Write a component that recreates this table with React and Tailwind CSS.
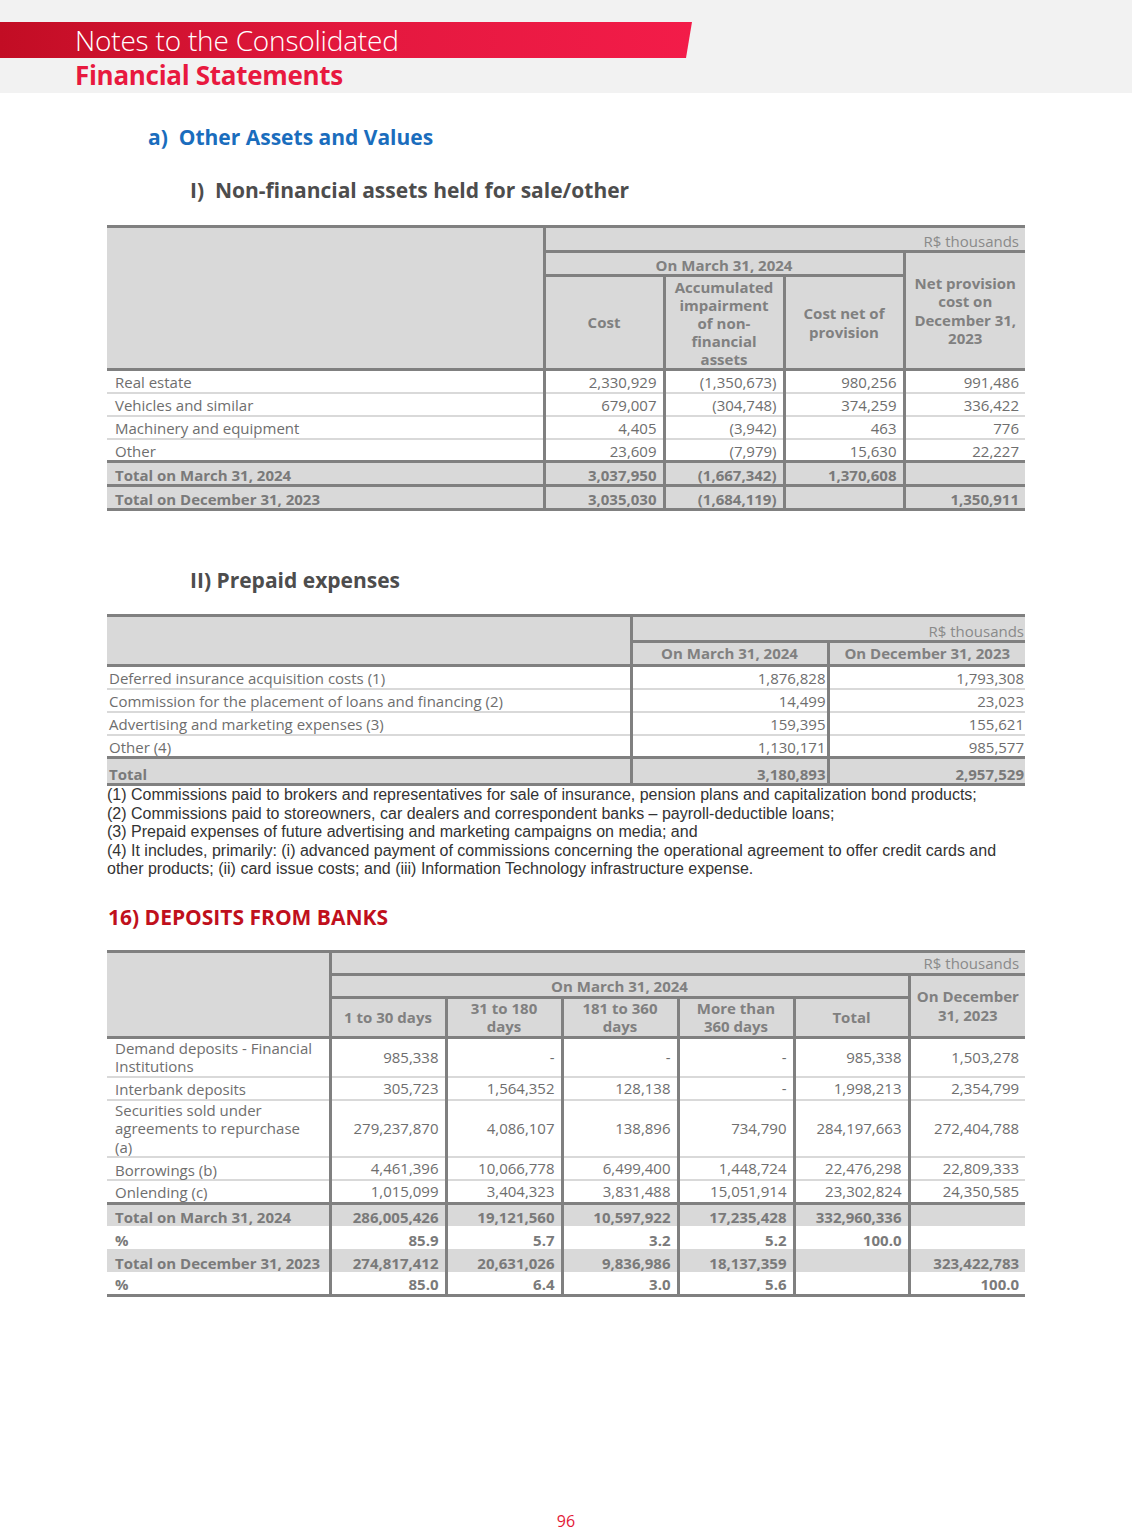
import React from 'react';

const thBase = 'bg-[#d9d9d9] font-bold text-[#808080]';

function Header() {
  return (
    <div className="h-[93px] bg-[#f2f2f2] pt-[22px]">
      <div className="h-[36px] w-[692px] bg-gradient-to-r from-[#c20d24] via-[#e3183e] to-[#f31c49] [clip-path:polygon(0_0,100%_0,calc(100%-6px)_100%,0_100%)] flex items-center pl-[75px]">
        <span className="text-white text-[28px] font-light leading-none tracking-[-0.2px]">Notes to the Consolidated</span>
      </div>
      <div className="pl-[75px] pt-[2px] text-[26px] font-bold leading-[31px] tracking-[-0.3px] text-[#e8193f]">Financial Statements</div>
    </div>
  );
}

function AssetsTable() {
  const rows = [
    ['Real estate', '2,330,929', '(1,350,673)', '980,256', '991,486'],
    ['Vehicles and similar', '679,007', '(304,748)', '374,259', '336,422'],
    ['Machinery and equipment', '4,405', '(3,942)', '463', '776'],
    ['Other', '23,609', '(7,979)', '15,630', '22,227'],
  ];
  const totals = [
    ['Total on March 31, 2024', '3,037,950', '(1,667,342)', '1,370,608', ''],
    ['Total on December 31, 2023', '3,035,030', '(1,684,119)', '', '1,350,911'],
  ];
  return (
    <table className="w-[918px] table-fixed border-collapse text-[15px] leading-[18.5px] text-[#6e6e6e]">
      <colgroup>
        <col className="w-[437px]" />
        <col className="w-[120px]" />
        <col className="w-[120px]" />
        <col className="w-[120px]" />
        <col className="w-[121px]" />
      </colgroup>
      <thead>
        <tr className="h-[25px]">
          <th rowSpan={3} className={`${thBase} border-t-[3px] border-b-[3px] border-r-[3px] border-[#808080]`}></th>
          <th colSpan={4} className="bg-[#d9d9d9] border-t-[3px] border-b-[3px] border-[#808080] text-right font-normal text-[#8a8a8a] pr-[6px] align-bottom">
            R$ thousands
          </th>
        </tr>
        <tr className="h-[24px]">
          <th colSpan={3} className={`${thBase} border-b-[3px] border-r-[3px] border-[#808080] align-bottom`}>
            On March 31, 2024
          </th>
          <th rowSpan={2} className={`${thBase} border-b-[3px] border-[#808080] align-middle`}>
            Net provision<br />cost on<br />December 31,<br />2023
          </th>
        </tr>
        <tr className="h-[94px]">
          <th className={`${thBase} border-b-[3px] border-r-[3px] border-[#808080]`}>Cost</th>
          <th className={`${thBase} leading-[18px] border-b-[3px] border-r-[3px] border-[#808080] align-bottom`}>
            Accumulated<br />impairment<br />of non-<br />financial<br />assets
          </th>
          <th className={`${thBase} border-b-[3px] border-r-[3px] border-[#808080]`}>
            Cost net of<br />provision
          </th>
        </tr>
      </thead>
      <tbody>
        {rows.map((r) => (
          <tr key={r[0]} className="h-[23px]">
            <td className="pl-[8px] align-bottom border-b-2 border-b-[#d9d9d9] border-r-[3px] border-r-[#808080]">{r[0]}</td>
            {r.slice(1).map((v, i) => (
              <td
                key={i}
                className={`pr-[6px] text-right align-bottom border-b-2 border-b-[#d9d9d9] ${i < 3 ? 'border-r-[3px] border-r-[#808080]' : ''}`}
              >
                {v}
              </td>
            ))}
          </tr>
        ))}
        {totals.map((r) => (
          <tr key={r[0]} className="h-[24px] bg-[#d9d9d9] font-bold text-[#7a7a7a]">
            <td className="pl-[8px] align-bottom border-t-[3px] border-b-[3px] border-[#808080] border-r-[3px]">{r[0]}</td>
            {r.slice(1).map((v, i) => (
              <td
                key={i}
                className={`pr-[6px] text-right align-bottom border-t-[3px] border-b-[3px] border-[#808080] ${i < 3 ? 'border-r-[3px]' : ''}`}
              >
                {v}
              </td>
            ))}
          </tr>
        ))}
      </tbody>
    </table>
  );
}

function PrepaidTable() {
  const rows = [
    ['Deferred insurance acquisition costs (1)', '1,876,828', '1,793,308'],
    ['Commission for the placement of loans and financing (2)', '14,499', '23,023'],
    ['Advertising and marketing expenses (3)', '159,395', '155,621'],
    ['Other (4)', '1,130,171', '985,577'],
  ];
  return (
    <table className="w-[918px] table-fixed border-collapse text-[15px] leading-[18.5px] text-[#6e6e6e]">
      <colgroup>
        <col className="w-[524px]" />
        <col className="w-[197px]" />
        <col className="w-[197px]" />
      </colgroup>
      <thead>
        <tr className="h-[26px]">
          <th rowSpan={2} className={`${thBase} border-t-[3px] border-b-[3px] border-r-[3px] border-[#808080]`}></th>
          <th colSpan={2} className="bg-[#d9d9d9] border-t-[3px] border-b-[3px] border-[#808080] text-right font-normal text-[#8a8a8a] pr-[1px] align-bottom">
            R$ thousands
          </th>
        </tr>
        <tr className="h-[24px]">
          <th className={`${thBase} border-b-[3px] border-r-[3px] border-[#808080]`}>On March 31, 2024</th>
          <th className={`${thBase} border-b-[3px] border-[#808080]`}>On December 31, 2023</th>
        </tr>
      </thead>
      <tbody>
        {rows.map((r) => (
          <tr key={r[0]} className="h-[23px]">
            <td className="pl-[2px] align-bottom border-b-2 border-b-[#d9d9d9] border-r-[3px] border-r-[#808080]">{r[0]}</td>
            <td className="pr-[1px] text-right align-bottom border-b-2 border-b-[#d9d9d9] border-r-[3px] border-r-[#808080]">{r[1]}</td>
            <td className="pr-[1px] text-right align-bottom border-b-2 border-b-[#d9d9d9]">{r[2]}</td>
          </tr>
        ))}
        <tr className="h-[27px] bg-[#d9d9d9] font-bold text-[#7a7a7a]">
          <td className="pl-[2px] align-bottom border-t-[3px] border-b-[3px] border-r-[3px] border-[#808080]">Total</td>
          <td className="pr-[1px] text-right align-bottom border-t-[3px] border-b-[3px] border-r-[3px] border-[#808080]">3,180,893</td>
          <td className="pr-[1px] text-right align-bottom border-t-[3px] border-b-[3px] border-[#808080]">2,957,529</td>
        </tr>
      </tbody>
    </table>
  );
}

function DepositsTable() {
  const rows = [
    [['Demand deposits - Financial', 'Institutions'], '985,338', '-', '-', '-', '985,338', '1,503,278', 'h-[38px]'],
    [['Interbank deposits'], '305,723', '1,564,352', '128,138', '-', '1,998,213', '2,354,799', 'h-[23px]'],
    [['Securities sold under', 'agreements to repurchase', '(a)'], '279,237,870', '4,086,107', '138,896', '734,790', '284,197,663', '272,404,788', 'h-[57px]'],
    [['Borrowings (b)'], '4,461,396', '10,066,778', '6,499,400', '1,448,724', '22,476,298', '22,809,333', 'h-[23px]'],
    [['Onlending (c)'], '1,015,099', '3,404,323', '3,831,488', '15,051,914', '23,302,824', '24,350,585', 'h-[23px]'],
  ];
  const totals = [
    ['Total on March 31, 2024', '286,005,426', '19,121,560', '10,597,922', '17,235,428', '332,960,336', '', true, true],
    ['%', '85.9', '5.7', '3.2', '5.2', '100.0', '', false, false],
    ['Total on December 31, 2023', '274,817,412', '20,631,026', '9,836,986', '18,137,359', '', '323,422,783', true, false],
    ['%', '85.0', '6.4', '3.0', '5.6', '', '100.0', false, false],
  ];
  return (
    <table className="w-[918px] table-fixed border-collapse text-[15px] leading-[18.5px] text-[#6e6e6e]">
      <colgroup>
        <col className="w-[223px]" />
        <col className="w-[116px]" />
        <col className="w-[116px]" />
        <col className="w-[116px]" />
        <col className="w-[116px]" />
        <col className="w-[115px]" />
        <col className="w-[116px]" />
      </colgroup>
      <thead>
        <tr className="h-[23px]">
          <th rowSpan={3} className={`${thBase} border-t-[3px] border-b-[3px] border-r-[3px] border-[#808080]`}></th>
          <th colSpan={6} className="bg-[#d9d9d9] border-t-[3px] border-b-[3px] border-[#808080] text-right font-normal text-[#8a8a8a] pr-[6px] align-bottom">
            R$ thousands
          </th>
        </tr>
        <tr className="h-[23px]">
          <th colSpan={5} className={`${thBase} border-b-[3px] border-r-[3px] border-[#808080] align-bottom`}>
            On March 31, 2024
          </th>
          <th rowSpan={2} className={`${thBase} border-b-[3px] border-[#808080] align-middle`}>
            On December<br />31, 2023
          </th>
        </tr>
        <tr className="h-[40px]">
          <th className={`${thBase} border-b-[3px] border-r-[3px] border-[#808080]`}>1 to 30 days</th>
          <th className={`${thBase} border-b-[3px] border-r-[3px] border-[#808080]`}>31 to 180<br />days</th>
          <th className={`${thBase} border-b-[3px] border-r-[3px] border-[#808080]`}>181 to 360<br />days</th>
          <th className={`${thBase} border-b-[3px] border-r-[3px] border-[#808080]`}>More than<br />360 days</th>
          <th className={`${thBase} border-b-[3px] border-r-[3px] border-[#808080]`}>Total</th>
        </tr>
      </thead>
      <tbody>
        {rows.map((r) => (
          <tr key={r[0][0]} className={r[7]}>
            <td className="pl-[8px] align-bottom border-b-2 border-b-[#d9d9d9] border-r-[3px] border-r-[#808080]">
              {r[0].map((l, i) => (
                <div key={i}>{l}</div>
              ))}
            </td>
            {r.slice(1, 7).map((v, i) => (
              <td
                key={i}
                className={`pr-[6px] text-right align-middle border-b-2 border-b-[#d9d9d9] ${i < 5 ? 'border-r-[3px] border-r-[#808080]' : ''}`}
              >
                {v}
              </td>
            ))}
          </tr>
        ))}
        {totals.map((r, idx) => (
          <tr
            key={idx}
            className={`h-[23px] font-bold text-[#7a7a7a] ${r[7] ? 'bg-[#d9d9d9]' : 'bg-white'} ${r[8] ? 'border-t-[3px] border-t-[#808080]' : ''} ${idx === 3 ? 'border-b-[3px] border-b-[#808080]' : ''}`}
          >
            <td className="pl-[8px] align-bottom border-r-[3px] border-r-[#808080]">{r[0]}</td>
            {r.slice(1, 7).map((v, i) => (
              <td key={i} className={`pr-[6px] text-right align-bottom ${i < 5 ? 'border-r-[3px] border-r-[#808080]' : ''}`}>
                {v}
              </td>
            ))}
          </tr>
        ))}
      </tbody>
    </table>
  );
}

export default function App() {
  return (
    <div className="min-h-[1537px] w-[1132px] bg-white flex flex-col" style={{ fontFamily: '"Open Sans", sans-serif' }}>
      <Header />

      <h2 className="mt-[32px] pl-[148px] text-[21px] leading-[24px] font-bold text-[#1a6dbd]">a)&nbsp; Other Assets and Values</h2>
      <h3 className="mt-[29px] pl-[190px] text-[21px] leading-[24px] font-bold text-[#4d4d4d]">I)&nbsp; Non-financial assets held for sale/other</h3>

      <div className="mt-[23px] pl-[107px]">
        <AssetsTable />
      </div>

      <h3 className="mt-[57px] pl-[190px] text-[21px] leading-[24px] font-bold text-[#4d4d4d]">II) Prepaid expenses</h3>

      <div className="mt-[22px] pl-[107px]">
        <PrepaidTable />
        <div className="w-[918px] text-[16px] leading-[18.5px] text-[#333333]" style={{ fontFamily: '"Liberation Sans", Arial, sans-serif' }}>
          <p>(1) Commissions paid to brokers and representatives for sale of insurance, pension plans and capitalization bond products;</p>
          <p>(2) Commissions paid to storeowners, car dealers and correspondent banks – payroll-deductible loans;</p>
          <p>(3) Prepaid expenses of future advertising and marketing campaigns on media; and</p>
          <p>
            (4) It includes, primarily: (i) advanced payment of commissions concerning the operational agreement to offer credit cards and
            <br />
            other products; (ii) card issue costs; and (iii) Information Technology infrastructure expense.
          </p>
        </div>
      </div>

      <h2 className="mt-[26px] pl-[108px] text-[21px] leading-[24px] font-bold text-[#c0101c]">16) DEPOSITS FROM BANKS</h2>

      <div className="mt-[21px] pl-[107px]">
        <DepositsTable />
      </div>

      <div className="mt-auto pb-[5px] text-center text-[16px] leading-[22px] text-[#e31937]">96</div>
    </div>
  );
}
